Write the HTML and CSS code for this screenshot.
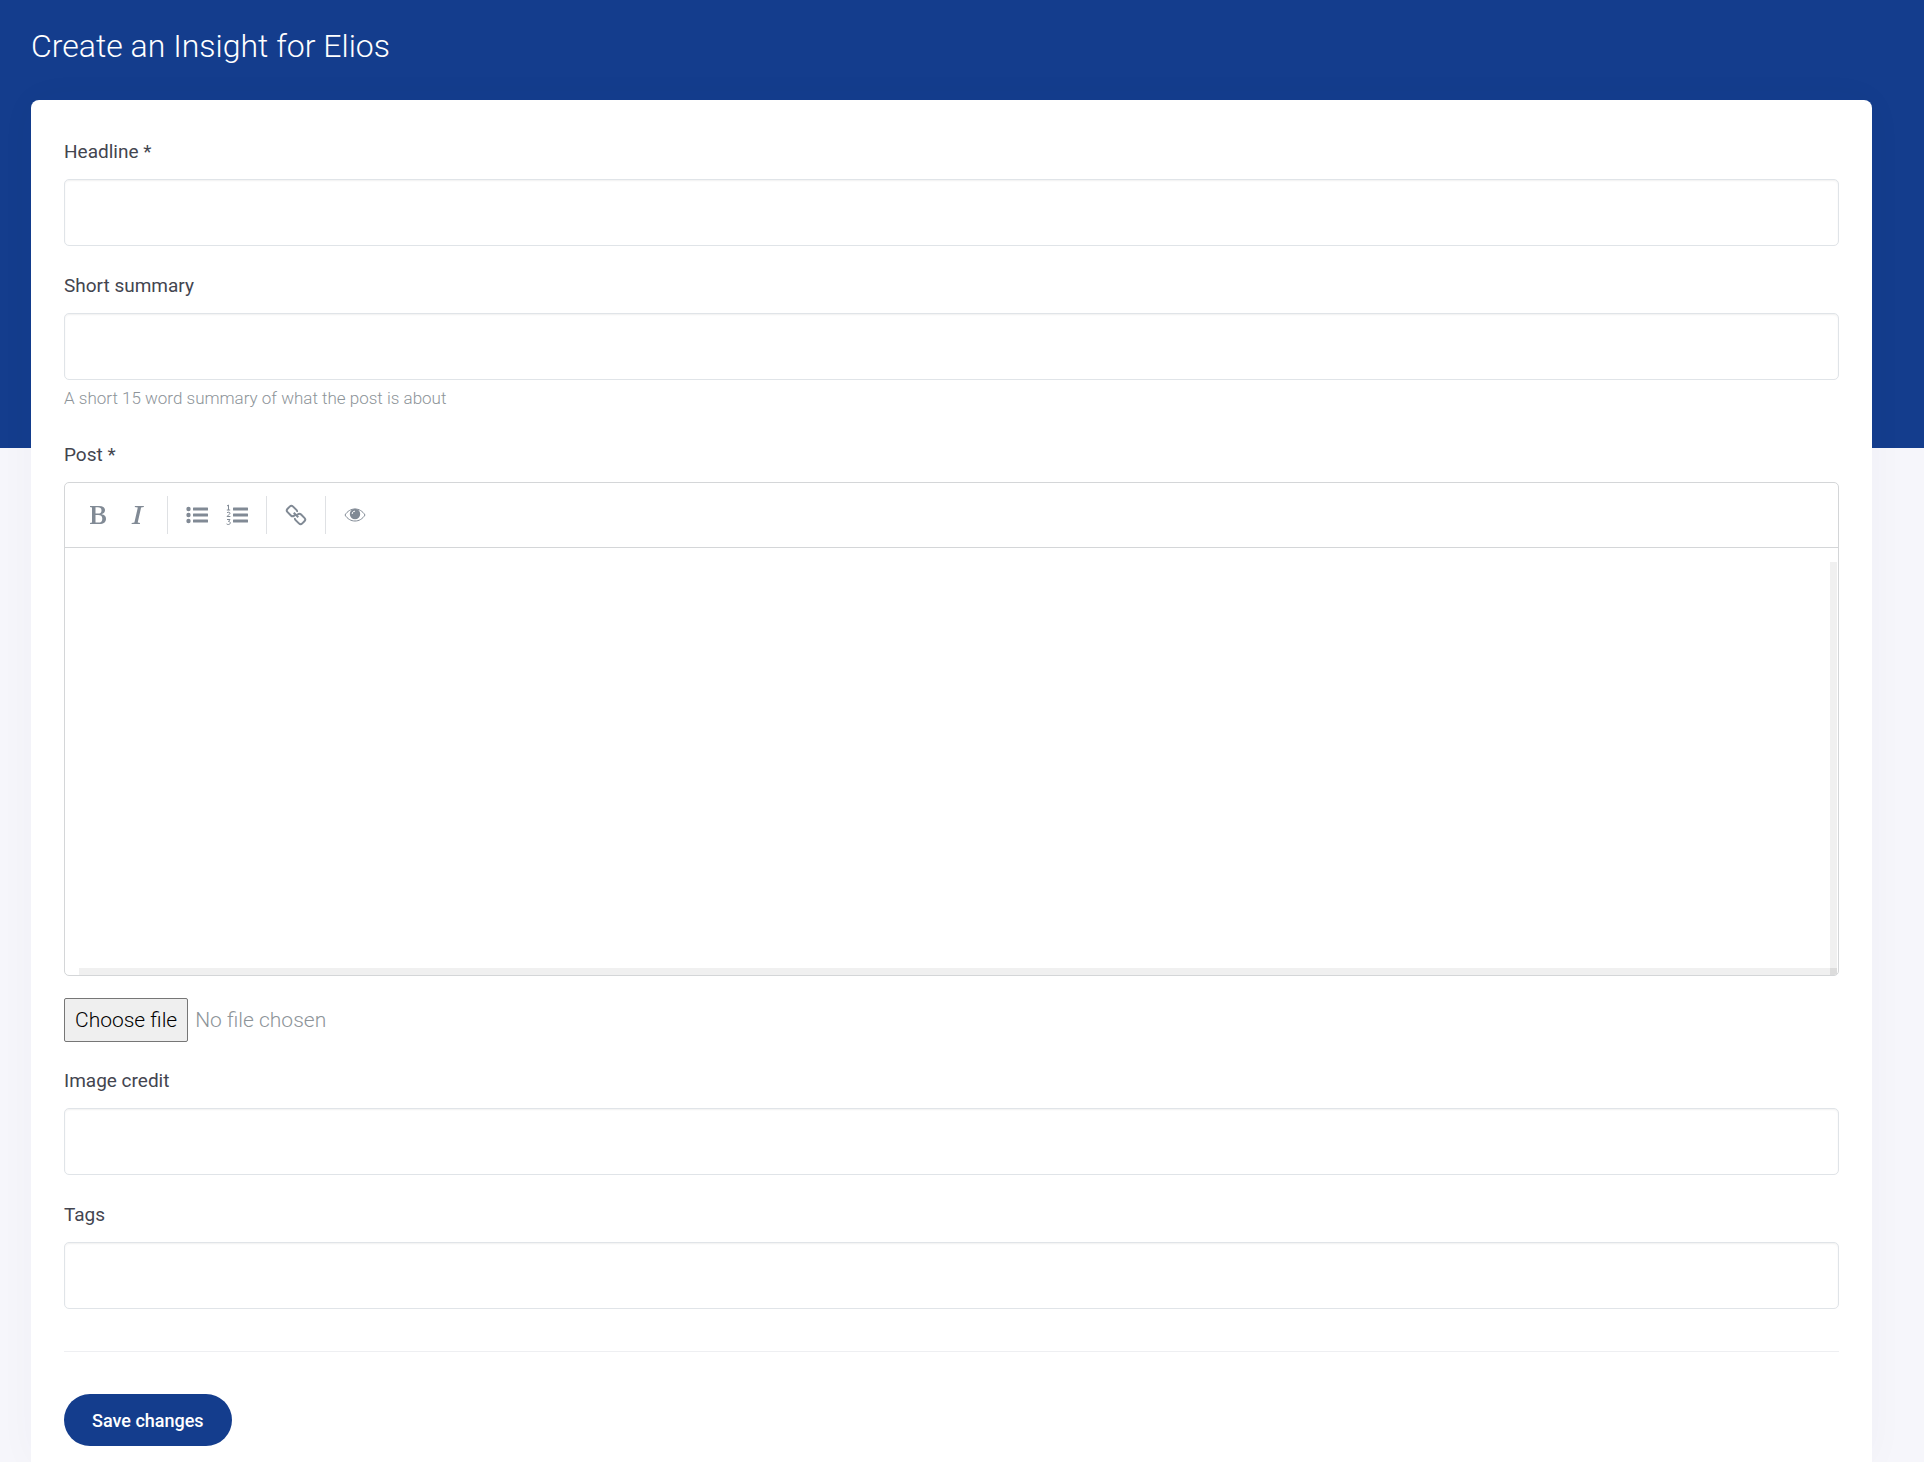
FILE: index.html
```html
<!DOCTYPE html>
<html lang="en">

<head>
    <meta charset="UTF-8">
    <meta name="viewport" content="width=device-width, initial-scale=1">
    <title>Create an Insight for Elios</title>
    <link rel="stylesheet" href="styles.css">
</head>

<body>
    <main class="page">
        <h1 class="page-title">Create an Insight for Elios</h1>
        <form class="card">
            <div class="form-group">
                <label for="headline">Headline *</label>
                <input type="text" class="form-control" id="headline" required>
            </div>
            <div class="form-group">
                <label for="summary">Short summary</label>
                <input type="text" class="form-control" id="summary" aria-describedby="summaryHelp">
                <small class="form-text" id="summaryHelp">A short 15 word summary of what the post is about</small>
            </div>
            <div class="form-group post">
                <label for="post">Post *</label>
                <div class="editor">
                    <div class="editor-toolbar">
                        <button type="button" title="Bold">
                            <svg width="20" height="20" viewBox="0 0 20 20"><path fill-rule="evenodd" d="M2 1h9c4 0 6 1.500 6 4.300 0 2-1.200 3.300-3.500 3.900 3 .5 4.500 2.100 4.500 4.500C18 17 15.500 19 11.500 19H2v-1l2-.5V2.500L2 2zM7.500 2.300v6.300h2.300c2.400 0 3.700-1 3.700-3.200 0-2.100-1.300-3.100-3.600-3.100zM7.500 10v7.600h3c2.500 0 3.800-1.400 3.800-3.900 0-2.600-1.500-3.700-4.200-3.700z"/></svg>
                        </button>
                        <button type="button" title="Italic">
                            <svg width="20" height="20" viewBox="0 0 20 20"><path d="M7 1h9l-.3 1.100-2.600.5-3.400 14.800 2.400.5-.3 1.100H3.500l.3-1.100 2.600-.5L9.800 2.600 6.700 2.100z"/></svg>
                        </button>
                        <i class="separator"></i>
                        <button type="button" title="Bulleted list">
                            <svg width="22" height="20" viewBox="0 0 22 20"><circle cx="2.500" cy="4" r="2.200"/><circle cx="2.500" cy="10" r="2.200"/><circle cx="2.500" cy="16" r="2.200"/><rect x="7" y="2.500" width="15" height="3" rx=".5"/><rect x="7" y="8.500" width="15" height="3" rx=".5"/><rect x="7" y="14.500" width="15" height="3" rx=".5"/></svg>
                        </button>
                        <button type="button" title="Numbered list">
                            <svg width="22" height="22" viewBox="0 0 22 22"><path class="line" d="M1 2l1.500-1v5M.8 6h3.400M1 8.800c1-1 3-.8 3 .5 0 1.200-2.600 2-3 3.200h3.400M1 15.500h3l-1.500 2c2.600 0 2.300 3-.2 3-.8 0-1.400-.3-1.700-.6"/><rect x="7" y="3.500" width="15" height="3" rx=".5"/><rect x="7" y="9.500" width="15" height="3" rx=".5"/><rect x="7" y="15.500" width="15" height="3" rx=".5"/></svg>
                        </button>
                        <i class="separator"></i>
                        <button type="button" title="Create link">
                            <svg width="20" height="20" viewBox="0 0 20 20"><g class="link" transform="rotate(45 10 10)"><path d="M8.500 7.200c-.3-.7-.9-1.100-1.800-1.100H2c-1.500 0-2.400.9-2.400 2.400v3c0 1.500.9 2.400 2.400 2.400h4.700c1.500 0 2.400-.9 2.400-2.400V10M11.500 12.800c.3.700.9 1.100 1.800 1.100H18c1.500 0 2.400-.9 2.400-2.400v-3c0-1.500-.9-2.400-2.400-2.400h-4.700c-1.500 0-2.400.9-2.400 2.400V10M6.800 10h6.400"/></g></svg>
                        </button>
                        <i class="separator"></i>
                        <button type="button" title="Toggle preview">
                            <svg width="22" height="16" viewBox="0 0 22 16"><path class="eye" d="M1 8c2.500-4 6-6 10-6s7.500 2 10 6c-2.500 4-6 6-10 6S3.500 12 1 8z"/><circle cx="11" cy="7" r="5.200"/><path class="glint" d="M8.200 7c0-1.700 1-2.800 2.800-2.800"/></svg>
                        </button>
                    </div>
                    <div class="editor-body">
                        <textarea id="post" required></textarea>
                        <div class="track-v"></div>
                        <div class="track-h"></div>
                        <div class="track-corner"></div>
                    </div>
                </div>
            </div>
            <div class="file-row">
                <input type="file" class="file-input" id="image">
                <label class="file-btn" for="image">Choose file</label>
                <span class="file-name">No file chosen</span>
            </div>
            <div class="form-group">
                <label for="credit">Image credit</label>
                <input type="text" class="form-control" id="credit">
            </div>
            <div class="form-group">
                <label for="tags">Tags</label>
                <input type="text" class="form-control" id="tags">
            </div>
            <hr>
            <button type="submit" class="btn-save">Save changes</button>
        </form>
    </main>
</body>

</html>
```
FILE: styles.css
```css
* {
    box-sizing: border-box;
}

body {
    margin: 0;
    background: #f6f6fb linear-gradient(#143d8d, #143d8d) no-repeat 0 0 / 100% 448px;
    font-family: Roboto, "Liberation Sans", sans-serif;
    font-weight: 300;
    color: #43454f;
}

.page {
    display: flex;
    flex-direction: column;
    min-height: 100vh;
    padding: 0 52px 0 31px;
}

.page-title {
    margin: 0;
    padding: 26px 0 34px;
    font-size: 32px;
    line-height: 40px;
    font-weight: 300;
    color: #fff;
}

.card {
    flex: 1;
    padding: 38px 33px 14px;
    background: #fff;
    border-radius: 8px 8px 0 0;
    box-shadow: 0 0 40px rgba(20, 30, 90, 0.03);
}

.form-group {
    margin-bottom: 26px;
}

.form-group label {
    display: block;
    margin-bottom: 13px;
    font-size: 19px;
    line-height: 28px;
    font-weight: 400;
}

.form-control {
    display: block;
    width: 100%;
    height: 67px;
    padding: 0 20px;
    border: 1px solid #e0e4e8;
    border-radius: 5px;
    background: #fff;
    box-shadow: inset 0 1px 2px rgba(0, 0, 0, 0.06);
    font: inherit;
    font-size: 20px;
}

.form-text {
    display: block;
    margin: 5px 0 30px;
    font-size: 17px;
    line-height: 26px;
    color: #8d9499;
}

.post {
    margin-bottom: 22px;
}

.editor {
    border: 1px solid #d4d6d8;
    border-radius: 5px;
    overflow: hidden;
}

.editor-toolbar {
    display: flex;
    align-items: center;
    height: 65px;
    padding: 0 13px;
    border-bottom: 1px solid #d4d6d8;
}

.editor-toolbar button {
    display: flex;
    align-items: center;
    justify-content: center;
    width: 40px;
    height: 40px;
    padding: 0;
    border: 0;
    background: none;
}

.editor-toolbar svg {
    fill: #818a95;
    overflow: visible;
}

.editor-toolbar .line,
.editor-toolbar .link,
.editor-toolbar .eye {
    fill: none;
    stroke: #818a95;
    stroke-width: 1;
}

.editor-toolbar .link {
    stroke-width: 2;
}

.editor-toolbar .glint {
    fill: none;
    stroke: #fff;
}

.separator {
    width: 1px;
    height: 38px;
    margin: 0 9px;
    background: #dfe1e4;
}

.editor-body {
    display: grid;
    grid-template-columns: 14px 1fr 7px;
    grid-template-rows: 14px 406px 7px;
    padding-right: 1px;
}

.editor-body textarea {
    grid-area: 2 / 2;
    padding: 0;
    border: 0;
    resize: none;
    font: inherit;
    font-size: 20px;
}

.track-v {
    grid-area: 2 / 3;
    background: #f0f0f0;
}

.track-h {
    grid-area: 3 / 2;
    background: #f0f0f0;
}

.track-corner {
    grid-area: 3 / 3;
    background: #dcdcdc;
}

.file-row {
    display: flex;
    align-items: center;
    gap: 7px;
    margin-bottom: 25px;
    font-size: 21px;
    line-height: 26px;
}

/* the native control is driven through its label */
.file-input {
    position: absolute;
    width: 1px;
    height: 1px;
    opacity: 0;
}

.file-btn {
    padding: 8px 10px;
    border: 1px solid #767676;
    border-radius: 2px;
    background: #efefef;
    color: #000;
}

.file-name {
    color: #8d9499;
}

hr {
    margin: 42px 0;
    border: 0;
    border-top: 1px solid #eeeff2;
}

.btn-save {
    height: 52px;
    padding: 0 28px;
    border: 0;
    border-radius: 26px;
    background: #143d8d;
    font: inherit;
    font-size: 18px;
    font-weight: 500;
    color: #fff;
}
```
